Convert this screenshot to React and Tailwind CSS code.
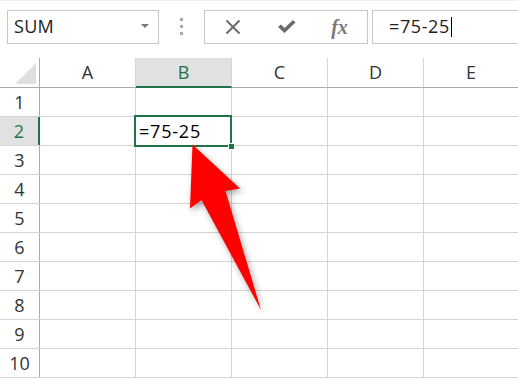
import React from 'react';

const cols = ['A', 'B', 'C', 'D', 'E'];
const rows = [1, 2, 3, 4, 5, 6, 7, 8, 9, 10];

function FormulaBar() {
  return (
    <div className="flex items-center h-[58px] pt-[9px] pb-[15px] border-t border-[#f0f0f0]">
      {/* Name box */}
      <div className="ml-[7px] w-[152px] h-[34px] border border-[#c6c6c6] flex items-center justify-between pl-[6px] pr-[9px]">
        <span className="text-[18px] text-[#222] tracking-[0.3px]">SUM</span>
        <svg width="8" height="5" viewBox="0 0 8 5">
          <path d="M0 0 L8 0 L4 4 Z" fill="#7a7a7a" />
        </svg>
      </div>
      {/* dots */}
      <div className="w-[45px] flex flex-col items-center gap-[4px]">
        <div className="w-[3px] h-[3px] bg-[#a8a8a8]" />
        <div className="w-[3px] h-[3px] bg-[#a8a8a8]" />
        <div className="w-[3px] h-[3px] bg-[#a8a8a8]" />
      </div>
      {/* buttons */}
      <div className="w-[164px] h-[34px] border border-[#c6c6c6] flex items-center">
        <div className="w-[55px] flex justify-center">
          <svg width="16" height="16" viewBox="0 0 16 16">
            <path d="M1.5 1.5 L14.5 14.5 M14.5 1.5 L1.5 14.5" stroke="#6b6b6b" strokeWidth="2" />
          </svg>
        </div>
        <div className="w-[52px] flex justify-center">
          <svg width="19" height="15" viewBox="0 0 19 15">
            <path d="M1 8 L4 5.5 L7.5 9 L16 1 L18.5 3.5 L7.5 14 Z" fill="#6b6b6b" />
          </svg>
        </div>
        <div className="flex-1 flex justify-center">
          <span className="text-[20px] italic font-bold text-[#7a7a7a] leading-none" style={{ fontFamily: '"Liberation Serif", serif' }}>fx</span>
        </div>
      </div>
      {/* formula input */}
      <div className="ml-[4px] flex-1 h-[34px] border border-[#c6c6c6] border-r-0 flex items-center pl-[16px]">
        <span className="text-[18px] text-[#222] tracking-[0.6px]">=75-25</span>
        <div className="w-[1px] h-[20px] bg-black ml-[1px]" />
      </div>
    </div>
  );
}

function Grid() {
  return (
    <div className="relative">
      {/* header row */}
      <div className="flex h-[30px] border-b border-[#ababab]">
        <div className="w-[40px] shrink-0 border-r border-[#ababab] relative">
          <svg className="absolute left-[15px] top-[5px]" width="22" height="21" viewBox="0 0 22 21">
            <path d="M0 21 L21 0 L21 21 Z" fill="#dfdfdf" />
          </svg>
        </div>
        {cols.map((c) => (
          <div
            key={c}
            className={
              c === 'B'
                ? 'w-[96px] shrink-0 border-r border-[#d4d4d4] bg-[#e1e1e1] text-[#217346] flex items-center justify-center text-[18px] border-b-2 border-b-[#217346] -mb-[1px]'
                : c === 'E'
                ? 'flex-1 flex items-center justify-center text-[18px] text-[#333]'
                : 'w-[96px] shrink-0 border-r border-[#d4d4d4] flex items-center justify-center text-[18px] text-[#333]'
            }
          >
            {c}
          </div>
        ))}
      </div>
      {rows.map((r) => (
        <div key={r} className="flex h-[29px] border-b border-[#d4d4d4]">
          <div
            className={
              r === 2
                ? 'w-[40px] shrink-0 border-r-2 border-[#217346] bg-[#e1e1e1] text-[#217346] flex items-center justify-center text-[18px]'
                : 'w-[40px] shrink-0 border-r border-[#ababab] text-[#333] flex items-center justify-center text-[18px]'
            }
          >
            {r}
          </div>
          {cols.map((c) => (
            <div
              key={c}
              className={c === 'E' ? 'flex-1' : 'w-[96px] shrink-0 border-r border-[#d4d4d4]'}
            />
          ))}
        </div>
      ))}

      {/* selected cell B2 */}
      <div className="absolute left-[134px] top-[57px] w-[98px] h-[32px] border-2 border-[#217346] flex items-center pl-[3px]">
        <span className="text-[18px] text-black font-medium tracking-[0.8px]">=75-25</span>
        <div className="absolute right-[-5px] bottom-[-5px] w-[7px] h-[7px] bg-[#217346] border border-white" />
      </div>
    </div>
  );
}

export default function App() {
  return (
    <div
      className="relative w-[518px] h-[380px] bg-white overflow-hidden"
      style={{ fontFamily: '"Open Sans", "Noto Sans", sans-serif' }}
    >
      <FormulaBar />
      <Grid />
      {/* red arrow */}
      <svg
        className="absolute left-0 top-0 drop-shadow-[2px_3px_3px_rgba(0,0,0,0.35)]"
        width="518"
        height="380"
        viewBox="0 0 518 380"
      >
        <path
          d="M192.5 144.5 L240 188.5 L225.5 191 L261 310 L201.5 200 L190 208.5 Z"
          fill="#ff0000"
        />
      </svg>
    </div>
  );
}
